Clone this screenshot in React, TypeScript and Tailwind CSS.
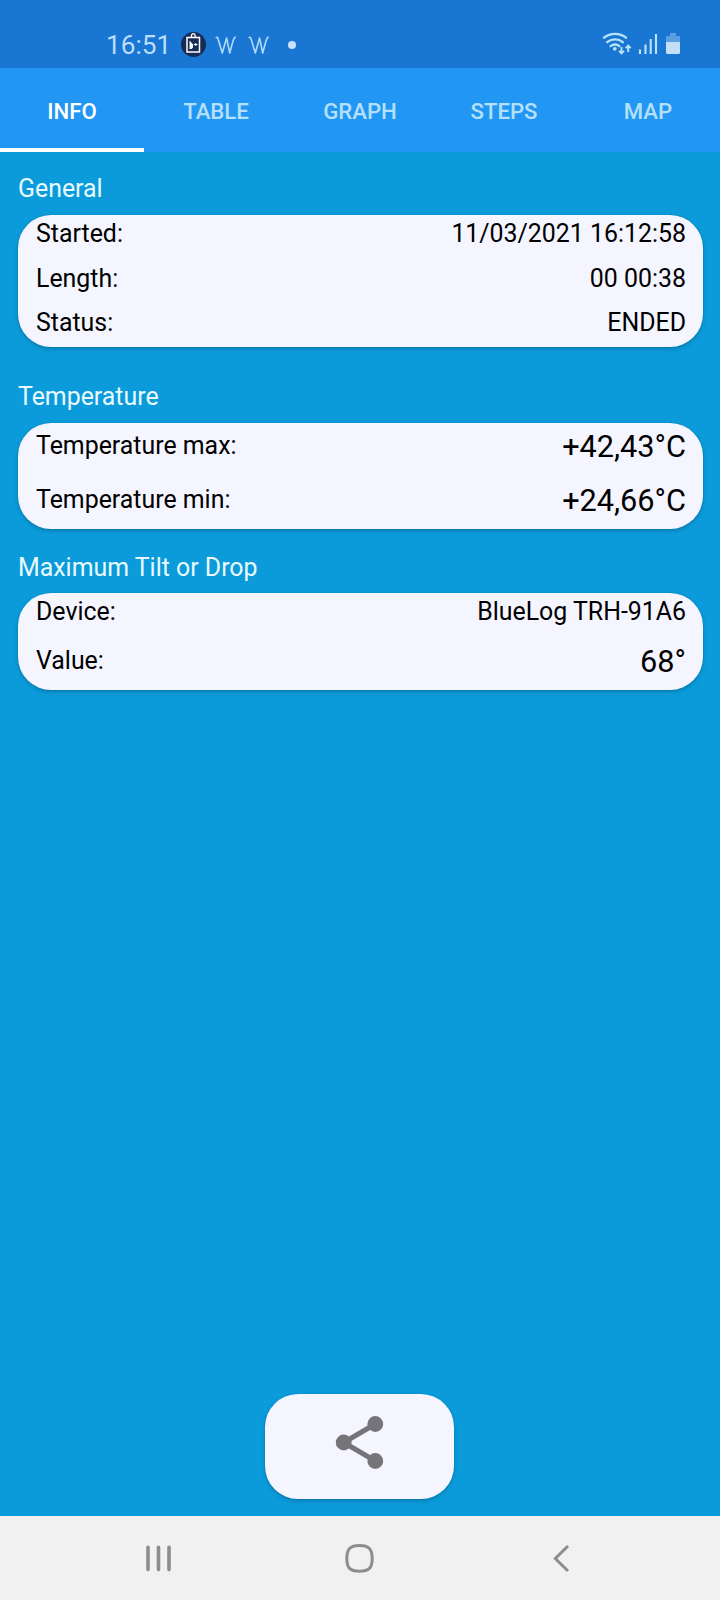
import React from "react";

type RowProps = { label: string; value: string; large?: boolean; className: string };

const tabs = ["INFO", "TABLE", "GRAPH", "STEPS", "MAP"];

function Row({ label, value, large = false, className }: RowProps) {
  return (
    <div className={`flex items-start justify-between ${className}`}>
      <span className="leading-[30px]">{label}</span>
      <span className={large ? "text-[30.7px] leading-[31px]" : "leading-[30px]"}>{value}</span>
    </div>
  );
}

function Card({ className, children }: { className: string; children: React.ReactNode }) {
  return (
    <div
      className={`flex flex-col rounded-[33px] bg-[#f5f5ff] pl-[18px] pr-[17px] text-black shadow-[0_2px_4px_rgba(0,0,0,0.2),0_0_2px_rgba(0,0,0,0.08)] ${className}`}
    >
      {children}
    </div>
  );
}

function WLogo({ className }: { className: string }) {
  return (
    <svg className={className} width="22" height="20" viewBox="0 0 22 20" fill="none">
      <path
        d="M.8 3C1.800 1.800 2.600 2.200 3 3.800L7.300 18 11.600 3 14.700 18 18 6C18.700 3.500 19.500 2.200 20.600 1.800"
        stroke="#b0dafa"
        strokeWidth="1.600"
        strokeLinejoin="round"
      />
    </svg>
  );
}

function StatusBar() {
  return (
    <header className="flex h-[68px] items-start justify-between bg-[#1976d2] pl-[106px] pr-[39px] pt-[29px] text-[#badefb]">
      <div className="flex h-[32px] items-center">
        <span className="w-[75px] text-[26.2px] leading-[32px]">16:51</span>
        <svg width="26" height="32" viewBox="181 29 26 32" fill="none">
          <circle cx="193.500" cy="44.500" r="12.500" fill="#172b54" />
          <rect x="187" y="37.500" width="12.500" height="14.500" stroke="#fff" strokeWidth="1.500" />
          <path d="M191.500 37v-1.500a1.800 1.800 0 0 1 3.600 0V37" stroke="#fff" strokeWidth="1.300" />
          <path d="M189.500 40.500l2 2.300 1.500 1.700v3l-1.500 1.500h-2zM193.500 44.500l2-1.200 2.500 1.300-2.500 1.200z" fill="#fff" />
        </svg>
        <WLogo className="ml-[8px]" />
        <WLogo className="ml-[11px]" />
        <span className="ml-[18px] size-2 rounded-full bg-[#c9e2fa]" />
      </div>
      <svg width="79" height="32" viewBox="602 29 79 32" fill="none">
        <g stroke="#b9e2fb" strokeWidth="2.300" strokeLinecap="round">
          <path d="M604 37.700a17.500 17.500 0 0 1 22 0M607.200 42.200a12.500 12.500 0 0 1 15.600 0M610.600 46.100a7.500 7.500 0 0 1 8.800 0" />
        </g>
        <circle cx="614.800" cy="48.800" r="1.900" fill="#b9e2fb" />
        <path d="M621.500 47v6.500m-2.500-2.700 2.500 2.500 2.500-2.500M628.200 52v-6.500m-2.500 2.700 2.500-2.500 2.500 2.500" stroke="#b9e2fb" strokeWidth="1.900" />
        <path d="M640 49.500V54M645.500 44.500V54M650.700 39V54M656 34V54" stroke="#b9e2fb" strokeWidth="2.100" />
        <path d="M670 33h6v3h4v6.500h-14V36h4z" fill="#5b9fe3" />
        <path d="M666 42h14v10.500q0 1.500-1.500 1.500h-11q-1.500 0-1.500-1.500z" fill="#c5dff7" />
      </svg>
    </header>
  );
}

export default function App() {
  return (
    <div className="flex h-[1600px] w-[720px] flex-col overflow-hidden bg-[#0b9bdb] font-['Roboto',sans-serif] text-[24.9px]">
      <StatusBar />
      <nav className="grid h-[84px] grid-cols-5 bg-[#2196f3] text-[22.2px] font-medium">
        {tabs.map((tab, index) => (
          <button
            key={tab}
            className={`flex items-center justify-center border-b-4 pt-[7px] ${
              index === 0 ? "border-white text-white" : "border-transparent text-[#b5e0fc]"
            }`}
          >
            {tab}
          </button>
        ))}
      </nav>
      <main className="flex flex-1 flex-col px-[18px] pr-[17px] pt-[22px]">
        <h2 className="h-[41px] leading-[30px] text-[#e8faff]">General</h2>
        <Card className="h-[132px] pt-[4px]">
          <Row label="Started:" value="11/03/2021 16:12:58" className="h-[45px]" />
          <Row label="Length:" value="00 00:38" className="h-[44px]" />
          <Row label="Status:" value="ENDED" className="h-[30px]" />
        </Card>
        <h2 className="mt-[35px] h-[41px] leading-[30px] text-[#e8faff]">Temperature</h2>
        <Card className="h-[106px] pt-[8px]">
          <Row large label="Temperature max:" value="+42,43°C" className="h-[54px]" />
          <Row large label="Temperature min:" value="+24,66°C" className="h-[37px]" />
        </Card>
        <h2 className="mt-[24px] h-[40px] leading-[30px] text-[#e8faff]">Maximum Tilt or Drop</h2>
        <Card className="h-[97px] pt-[4px]">
          <Row label="Device:" value="BlueLog TRH-91A6" className="h-[49px]" />
          <Row large label="Value:" value="68°" className="h-[37px]" />
        </Card>
        <button
          aria-label="Share"
          className="mb-[17px] ml-[247px] mt-auto flex h-[105px] w-[189px] justify-center rounded-[33px] bg-[#f5f5ff] pt-[20px] shadow-[0_2px_4px_rgba(0,0,0,0.2),0_0_2px_rgba(0,0,0,0.08)]"
        >
          <svg width="50" height="56" viewBox="335 1414 50 56" fill="#757478">
            <path d="M375.300 1424 343.700 1442.500 375.300 1461" fill="none" stroke="#757478" strokeWidth="5" />
            <circle cx="375.300" cy="1424" r="7.900" />
            <circle cx="343.700" cy="1442.500" r="7.900" />
            <circle cx="375.300" cy="1461" r="7.900" />
          </svg>
        </button>
      </main>
      <footer className="flex h-[84px] items-center bg-[#f1f1f1] pl-[144px]">
        <svg width="30" height="32" viewBox="144 1542 30 32" stroke="#8d8d8d" strokeWidth="3.600" strokeLinecap="round">
          <path d="M148 1547.200v22.400M158.500 1547.200v22.400M169 1547.200v22.400" />
        </svg>
        <svg className="ml-[170px]" width="32" height="32" viewBox="344 1542 32 32" fill="none" stroke="#8d8d8d" strokeWidth="3">
          <path d="M359.500 1545.500c9.500 0 12.700 3.500 12.700 13s-3.200 12.700-12.700 12.700-12.700-3.200-12.700-12.700 3.200-13 12.700-13z" />
        </svg>
        <svg className="ml-[176px]" width="20" height="32" viewBox="552 1542 20 32" fill="none" stroke="#8d8d8d" strokeWidth="3">
          <path d="M568 1546 555.300 1558.500 568 1571" />
        </svg>
      </footer>
    </div>
  );
}
